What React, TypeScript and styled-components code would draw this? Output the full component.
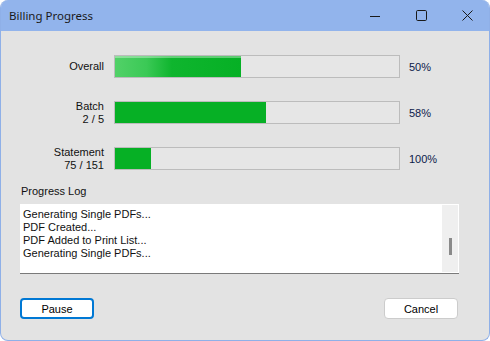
import React from 'react'
import styled, { createGlobalStyle } from 'styled-components'

const GlobalStyle = createGlobalStyle`
  html, body {
    margin: 0;
    padding: 0;
    background: #ffffff;
  }
`

const Window = styled.div`
  width: 490px;
  height: 341px;
  box-sizing: border-box;
  display: flex;
  flex-direction: column;
  background: #e3e3e3;
  border: 1px solid #8fb0e8;
  border-top: none;
  border-radius: 8px;
  overflow: hidden;
  font-family: 'Liberation Sans', Arial, sans-serif;
  font-size: 11px;
  color: #000;
`
const TitleBar = styled.div`
  height: 31px;
  flex: none;
  margin: 0 -1px;
  background: #92b4ec;
  display: flex;
  align-items: center;
  padding-left: 9px;
`
const Title = styled.div`
  flex: 1;
  font-family: 'Noto Sans', 'Open Sans', sans-serif;
  font-size: 11.5px;
  color: #1a1a1a;
  padding-bottom: 1px;
`
const CaptionButton = styled.div`
  width: 46px;
  height: 31px;
  display: flex;
  align-items: center;
  justify-content: center;
  color: #1a1a1a;
`
const Content = styled.div`
  flex: 1;
  display: flex;
  flex-direction: column;
  padding: 24px 0 0;
`
const Rows = styled.div`
  display: grid;
  grid-template-columns: 103px 286px auto;
  grid-auto-rows: 23px;
  column-gap: 10px;
  row-gap: 23px;
  align-items: center;
`
const RowLabel = styled.div`
  height: 23px;
  display: flex;
  flex-direction: column;
  justify-content: center;
  align-items: flex-end;
  line-height: 13px;
  color: #111;
`
const Track = styled.div`
  height: 23px;
  box-sizing: border-box;
  border: 1px solid #bcbcbc;
  background: #e6e6e6;
  display: flex;
`
const Fill = styled.div<{ $glow?: boolean }>`
  height: 100%;
  background: ${({ $glow }) =>
    $glow
      ? 'linear-gradient(180deg, rgba(255,255,255,0.35) 0, rgba(255,255,255,0.35) 2px, rgba(255,255,255,0) 2px), linear-gradient(90deg, #52d168 0%, #3bc956 25%, #0fb52e 45%, #06b025 100%)'
      : '#06b025'};
`
const Percent = styled.div`
  margin-left: -1px;
  color: #0c1a4a;
`
const LogLabel = styled.div`
  margin: 15px 0 0 20px;
  line-height: 13px;
  color: #111;
`
const LogBox = styled.div`
  margin: 6px 0 0 19px;
  width: 439px;
  height: 70px;
  box-sizing: border-box;
  background: #ffffff;
  border-bottom: 1px solid #7a7a7a;
  display: flex;
`
const LogLines = styled.div`
  flex: 1;
  padding: 4px 0 0 3px;
  line-height: 13px;
  color: #111;
`
const ScrollTrack = styled.div`
  width: 16px;
  margin: 1px 1px 1px 0;
  background: #efefef;
  display: flex;
  justify-content: center;
  align-items: flex-start;
  padding-top: 33px;
  box-sizing: border-box;
`
const ScrollThumb = styled.div`
  width: 3px;
  height: 17px;
  background: #8a8a8a;
`
const Buttons = styled.div`
  display: flex;
  justify-content: space-between;
  margin: 24px 0 0 19px;
  width: 438px;
`
const Button = styled.button<{ $primary?: boolean }>`
  width: 74px;
  height: 21px;
  padding: 0;
  box-sizing: border-box;
  background: #ffffff;
  border: ${({ $primary }) => ($primary ? '2px solid #0078d4' : '1px solid #cccccc')};
  border-radius: 4px;
  font-family: 'Liberation Sans', Arial, sans-serif;
  font-size: 11px;
  color: #000;
`

const rows = [
  { label: ['Overall'], value: 0.445, pct: '50%', glow: true },
  { label: ['Batch', '2 / 5'], value: 0.532, pct: '58%' },
  { label: ['Statement', '75 / 151'], value: 0.126, pct: '100%' },
]

const log = [
  'Generating Single PDFs...',
  'PDF Created...',
  'PDF Added to Print List...',
  'Generating Single PDFs...',
]

const App = (): JSX.Element => (
  <>
    <GlobalStyle />
    <Window>
      <TitleBar>
        <Title>Billing Progress</Title>
        <CaptionButton>
          <svg width="10" height="10" viewBox="0 0 10 10">
            <path d="M0 5.5h10" stroke="currentColor" strokeWidth="1" />
          </svg>
        </CaptionButton>
        <CaptionButton>
          <svg width="11" height="11" viewBox="0 0 11 11">
            <rect x="0.5" y="0.5" width="10" height="10" rx="1.2" fill="none" stroke="currentColor" />
          </svg>
        </CaptionButton>
        <CaptionButton>
          <svg width="11" height="11" viewBox="0 0 11 11">
            <path d="M0.5 0.5l10 10M10.5 0.5l-10 10" stroke="currentColor" strokeWidth="1" />
          </svg>
        </CaptionButton>
      </TitleBar>
      <Content>
        <Rows>
          {rows.map((r) => (
            <React.Fragment key={r.label[0]}>
              <RowLabel>
                {r.label.map((l) => (
                  <div key={l}>{l}</div>
                ))}
              </RowLabel>
              <Track>
                <Fill $glow={r.glow} style={{ width: `${r.value * 100}%` }} />
              </Track>
              <Percent>{r.pct}</Percent>
            </React.Fragment>
          ))}
        </Rows>
        <LogLabel>Progress Log</LogLabel>
        <LogBox>
          <LogLines>
            {log.map((l, i) => (
              <div key={i}>{l}</div>
            ))}
          </LogLines>
          <ScrollTrack>
            <ScrollThumb />
          </ScrollTrack>
        </LogBox>
        <Buttons>
          <Button $primary>Pause</Button>
          <Button>Cancel</Button>
        </Buttons>
      </Content>
    </Window>
  </>
)

export default App
